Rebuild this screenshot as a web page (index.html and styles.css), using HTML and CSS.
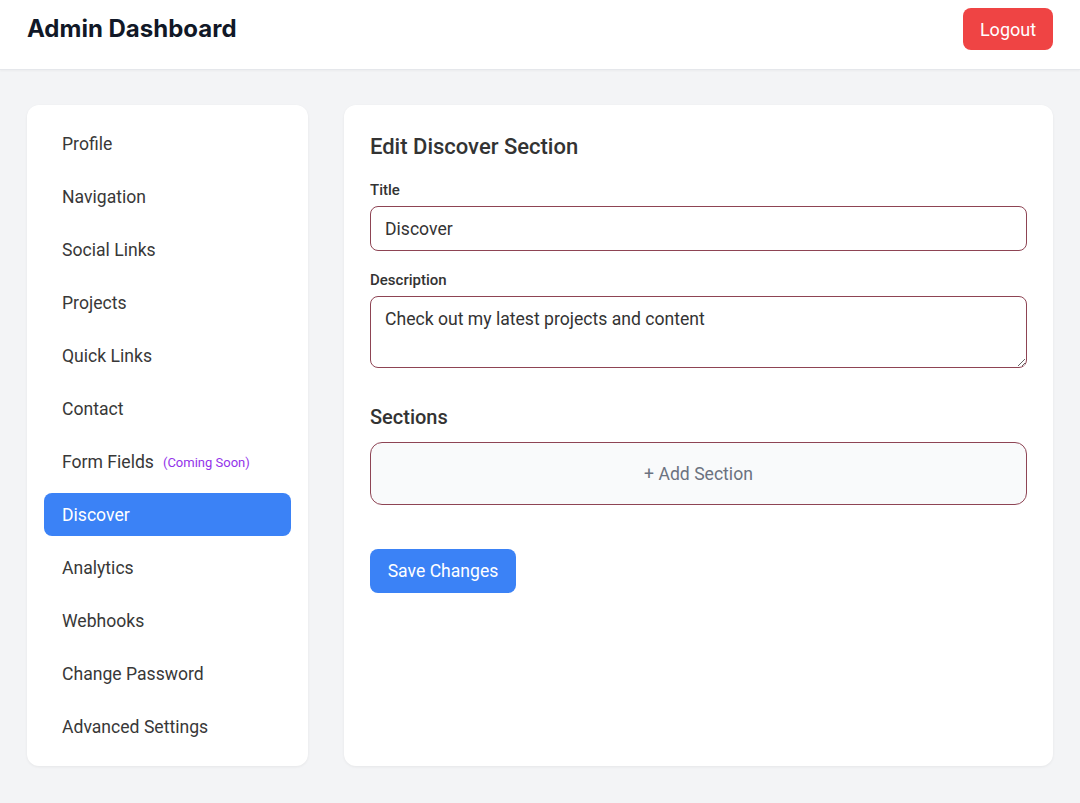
FILE: index.html
```html
<!DOCTYPE html>
<html lang="en">
<head>
<meta charset="utf-8">
<title>Admin Dashboard</title>
<link rel="stylesheet" href="styles.css">
</head>
<body>
<header class="topbar">
  <h1 class="brand">Admin Dashboard</h1>
  <button class="logout">Logout</button>
</header>
<div class="layout">
  <nav class="sidebar">
    <a class="nav-item">Profile</a>
    <a class="nav-item">Navigation</a>
    <a class="nav-item">Social Links</a>
    <a class="nav-item">Projects</a>
    <a class="nav-item">Quick Links</a>
    <a class="nav-item">Contact</a>
    <a class="nav-item">Form Fields <span class="soon">(Coming Soon)</span></a>
    <a class="nav-item active">Discover</a>
    <a class="nav-item">Analytics</a>
    <a class="nav-item">Webhooks</a>
    <a class="nav-item">Change Password</a>
    <a class="nav-item">Advanced Settings</a>
  </nav>
  <main class="panel">
    <h2 class="panel-title">Edit Discover Section</h2>
    <label class="field-label">Title</label>
    <input class="field-input" type="text" value="Discover">
    <label class="field-label">Description</label>
    <textarea class="field-textarea">Check out my latest projects and content</textarea>
    <h3 class="sub-title">Sections</h3>
    <button class="add-section">+ Add Section</button>
    <button class="save">Save Changes</button>
  </main>
</div>
</body>
</html>
```
FILE: styles.css
```css
* { box-sizing: border-box; }
html, body { margin: 0; }
body {
  font-family: Roboto, "Liberation Sans", sans-serif;
  background: #f3f4f6;
  color: #333;
  min-height: 803px;
}
.topbar {
  height: 70px;
  background: #fff;
  border-bottom: 1px solid #e5e7eb;
  box-shadow: 0 1px 2px rgba(0,0,0,0.04);
  display: flex;
  justify-content: space-between;
  align-items: flex-start;
  padding: 8px 27px 0;
}
.brand {
  margin: 0;
  font-family: Inter, Roboto, sans-serif;
  font-size: 24px;
  font-weight: 700;
  color: #111827;
  line-height: 42px;
}
.logout {
  background: #ef4444;
  color: #fff;
  border: none;
  border-radius: 8px;
  font-family: inherit;
  font-size: 18px;
  height: 42px;
  width: 90px;
  padding: 0;
}
.layout {
  display: flex;
  gap: 36px;
  padding: 35px 27px 0;
}
.sidebar {
  width: 281px;
  flex: none;
  height: 661px;
  background: #fff;
  border-radius: 12px;
  box-shadow: 0 1px 3px rgba(0,0,0,0.06);
  padding: 17px 17px 16px;
  display: flex;
  flex-direction: column;
  gap: 10px;
}
.nav-item {
  display: flex;
  align-items: center;
  height: 43px;
  padding: 0 18px;
  font-size: 17.6px;
  color: #383838;
  border-radius: 8px;
  flex: none;
}
.nav-item.active {
  background: #3b82f6;
  color: #fff;
}
.soon {
  font-size: 13px;
  color: #9333ea;
  margin-left: 9px;
  margin-top: 2px;
}
.panel {
  flex: 1;
  height: 661px;
  background: #fff;
  border-radius: 12px;
  box-shadow: 0 1px 3px rgba(0,0,0,0.06);
  padding: 28px 26px;
  display: flex;
  flex-direction: column;
  align-items: flex-start;
}
.panel-title {
  margin: 0 0 20px;
  font-size: 22px;
  font-weight: 500;
  line-height: 28px;
  color: #333;
}
.field-label {
  font-size: 15px;
  font-weight: 500;
  color: #333;
  line-height: 18px;
  margin-bottom: 7px;
}
.field-input, .field-textarea {
  width: 100%;
  border: 1px solid #8e4454;
  border-radius: 8px;
  font-family: inherit;
  font-size: 17.6px;
  color: #333;
  padding: 0 14px;
  background: #fff;
  outline: none;
}
.field-input {
  height: 45px;
  margin-bottom: 20px;
}
.field-textarea {
  height: 72px;
  padding-top: 10px;
  line-height: 24px;
  resize: vertical;
  margin-bottom: 36px;
}
.sub-title {
  margin: 0 0 12px;
  font-size: 20px;
  font-weight: 500;
  line-height: 26px;
  color: #333;
}
.add-section {
  width: 100%;
  height: 63px;
  background: #f9fafb;
  border: 1px solid #8e4454;
  border-radius: 12px;
  font-family: inherit;
  font-size: 17.6px;
  color: #6b7280;
  margin-bottom: 44px;
}
.save {
  height: 44px;
  width: 146px;
  padding: 0;
  background: #3b82f6;
  color: #fff;
  border: none;
  border-radius: 8px;
  font-family: inherit;
  font-size: 17.6px;
}
```
